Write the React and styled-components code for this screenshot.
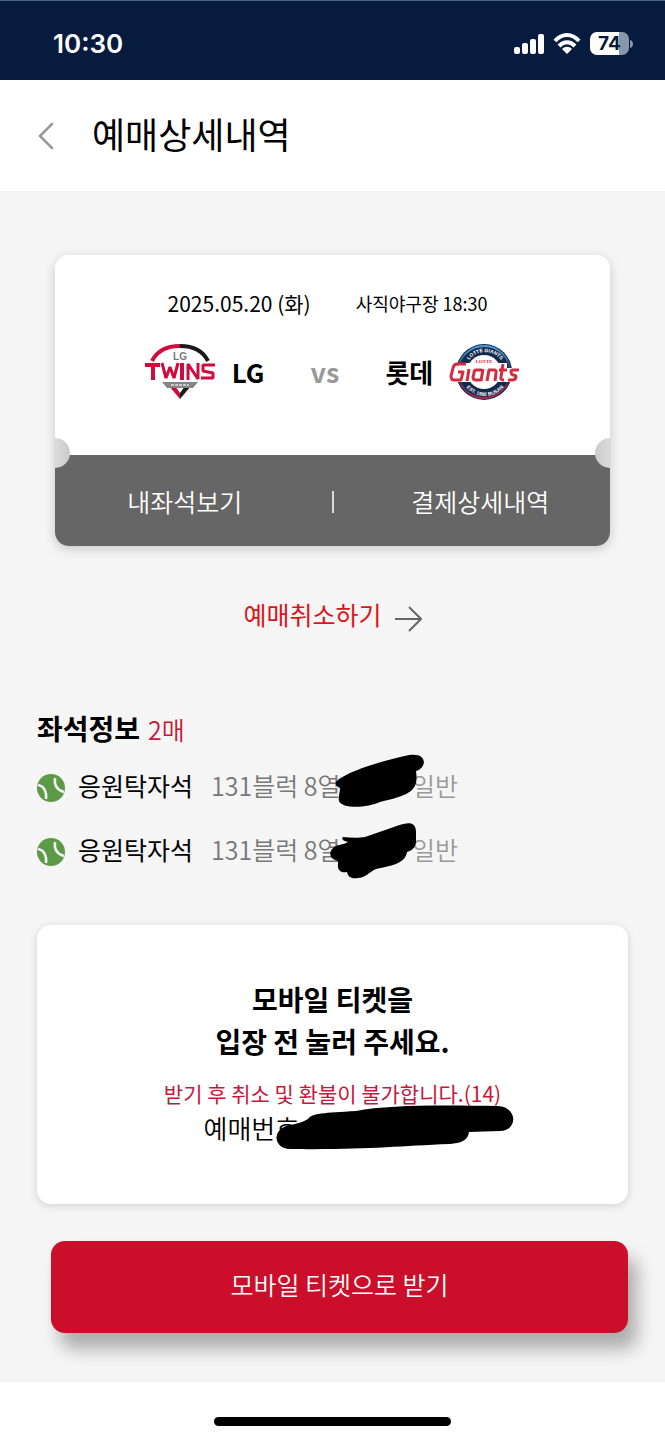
import React from 'react';
import styled, { createGlobalStyle } from 'styled-components';

const Global = createGlobalStyle`
  *, *::before, *::after { box-sizing: border-box; }
  body { margin: 0; background: #fff; }
  body, button { font-family: "Noto Sans CJK KR", "Noto Sans", sans-serif; }
  h1, h2, p, ul { margin: 0; padding: 0; font-weight: 400; }
  svg { display: block; }
`;

const Page = styled.div`
  min-height: 100vh;
  display: flex;
  flex-direction: column;
  color: #000;
`;

const StatusBar = styled.div`
  display: flex;
  align-items: center;
  justify-content: space-between;
  height: 80px;
  padding: 6px 32px 0 53px;
  background: #061b3e;
  border-top: 1px solid #4d668c;
  color: #fff;
`;

const Clock = styled.time`
  font: 600 26px/32px Inter, sans-serif;
`;

const StatusIcons = styled.div`
  display: flex;
  align-items: center;
  gap: 9px;
`;

const Battery = styled.div`
  display: flex;
  align-items: center;
  gap: 1px;
`;

const BatteryBody = styled.div`
  width: 39px;
  height: 23px;
  border-radius: 7px;
  background: linear-gradient(90deg, #fff 74%, #8b96a9 74%);
  color: #061b3e;
  font: 700 19px/23px Inter, sans-serif;
  text-align: center;
`;

const Header = styled.header`
  display: flex;
  align-items: center;
  gap: 38px;
  height: 111px;
  padding: 0 37px;
`;

const BackButton = styled.button`
  padding: 0;
  border: 0;
  background: none;
`;

const Title = styled.h1`
  padding-bottom: 6px;
  font-size: 36px;
  line-height: 52px;
`;

const Main = styled.main`
  flex: 1;
  padding: 64px 37px 48px;
  background: #f5f5f5;
`;

const Ticket = styled.section`
  position: relative;
  margin: 0 18px;
  border-radius: 14px;
  box-shadow: 0 3px 12px rgba(0, 0, 0, 0.18);
`;

const TicketTop = styled.div`
  display: flex;
  flex-direction: column;
  align-items: center;
  gap: 24px;
  height: 200px;
  padding-top: 32px;
  border-radius: 14px 14px 0 0;
  background: #fff;
`;

const Schedule = styled.div`
  display: flex;
  align-items: center;
  gap: 45px;
  padding-right: 10px;
  line-height: 32px;
`;

const DateText = styled.span`
  font-size: 21px;
`;

const Venue = styled.span`
  font-size: 18px;
`;

const Match = styled.div`
  display: flex;
  align-items: center;
`;

const Team = styled.div`
  display: flex;
  align-items: center;
  gap: 16px;
  font-size: 26px;
  line-height: 40px;
  font-weight: 700;
`;

const Versus = styled.span`
  margin: 0 46px;
  color: #999;
  font-size: 27px;
  line-height: 40px;
  font-weight: 700;
`;

const TicketActions = styled.div`
  display: grid;
  grid-template-columns: 1fr 2px 1fr;
  column-gap: 17px;
  align-items: center;
  height: 91px;
  padding-top: 2px;
  border-radius: 0 0 14px 14px;
  background: #666;
`;

const TicketAction = styled.button`
  padding: 0 0 2px;
  border: 0;
  background: none;
  color: #fff;
  font-size: 25px;
  line-height: 36px;
  font-weight: 350;
`;

const Divider = styled.span`
  height: 22px;
  background: #ddd;
`;

const Notch = styled.span`
  position: absolute;
  top: 183px;
  ${(p) => p.$side}: -1px;
  width: 16px;
  height: 30px;
  border-radius: ${(p) => (p.$side === 'left' ? '0 15px 15px 0' : '15px 0 0 15px')};
  background: linear-gradient(
    ${(p) => (p.$side === 'left' ? '90deg' : '270deg')},
    #dcdcdc,
    #cacaca
  );
`;

const CancelLink = styled.a`
  display: flex;
  align-items: center;
  justify-content: center;
  gap: 13px;
  margin-top: 50px;
  color: #d8151b;
  font-size: 25px;
  line-height: 36px;
  text-decoration: none;
  svg { margin-top: 10px; }
`;

const SectionTitle = styled.h2`
  display: flex;
  align-items: baseline;
  gap: 8px;
  margin-top: 75px;
  font-size: 28px;
  line-height: 42px;
  font-weight: 700;
`;

const Count = styled.span`
  color: #c4183c;
  font-size: 25px;
  font-weight: 350;
`;

const SeatList = styled.ul`
  display: grid;
  gap: 28px;
  margin-top: 17px;
  list-style: none;
`;

const Seat = styled.li`
  position: relative;
  display: flex;
  align-items: center;
  font-size: 25px;
  line-height: 36px;
  white-space: pre;
  svg:first-child { margin-top: 6px; }
`;

const SeatName = styled.span`
  margin: 0 18px 0 13px;
`;

const SeatPlace = styled.span`
  width: 201px;
  color: #777;
  font-weight: 350;
`;

const SeatType = styled.span`
  color: #999;
  font-weight: 350;
`;

const Scribble = styled.svg`
  position: absolute;
  top: ${(p) => p.$top}px;
  left: ${(p) => p.$left}px;
`;

const Notice = styled.section`
  margin-top: 58px;
  padding: 53px 0 58px;
  border-radius: 14px;
  background: #fff;
  box-shadow: 0 2px 8px rgba(0, 0, 0, 0.15);
  text-align: center;
`;

const NoticeTitle = styled.h2`
  font-size: 28px;
  line-height: 42px;
  font-weight: 700;
`;

const Warning = styled.p`
  margin-top: 14px;
  color: #c4183c;
  font-size: 21px;
  line-height: 34px;
`;

const BookingNumber = styled.p`
  position: relative;
  width: 310px;
  margin: 0 auto;
  padding-left: 26px;
  font-size: 26px;
  line-height: 36px;
  font-weight: 350;
  text-align: left;
`;

const ReceiveButton = styled.button`
  display: block;
  width: calc(100% - 14px);
  margin: 37px 0 0 14px;
  padding: 25px 0 31px;
  border: 0;
  border-radius: 14px;
  background: #cb0e2a;
  box-shadow: 9px 16px 18px rgba(0, 0, 0, 0.3);
  color: #fff;
  font-size: 25px;
  line-height: 36px;
  font-weight: 350;
`;

const HomeArea = styled.footer`
  display: flex;
  align-items: center;
  justify-content: center;
  height: 58px;
  padding-top: 21px;
`;

const HomeBar = styled.span`
  width: 237px;
  height: 9px;
  border-radius: 5px;
  background: #000;
`;

const TwinsLogo = () => (
  <svg width="72" height="56" viewBox="0 0 72 56" role="img" aria-label="LG Twins">
    <path d="M8 17C13 7 23 2 36 2" fill="none" stroke="#d00b3d" strokeWidth="4" />
    <path d="M36 2C49 2 59 7 64 17" fill="none" stroke="#1c1a1b" strokeWidth="4" />
    <text x="36" y="16" textAnchor="middle" fontFamily="Liberation Sans" fontSize="10" fontWeight="700" fill="#777">LG</text>
    <g fill="none" stroke="#d00b3d" strokeWidth="4" strokeLinejoin="bevel">
      <path d="M1 21H16M9 21V36" />
      <path d="M18 19L22 34L26 23L30 34L34 19" strokeWidth="3" />
      <path d="M38 19V36" />
      <path d="M44 36V20L54 35V19" strokeWidth="3" />
      <path d="M71 21H59V27L69 29V34H57" strokeWidth="3" />
    </g>
    <path d="M25 42L36 55V49L31 42z" fill="#d00b3d" />
    <path d="M47 42L36 55V49L41 42z" fill="#1c1a1b" />
    <path d="M18 38H54L49 44H23z" fill="#858585" />
    <path d="M27 41H45" stroke="#ccc" strokeWidth="2" strokeDasharray="3 1" />
  </svg>
);

const GiantsLogo = () => (
  <svg width="72" height="58" viewBox="0 0 72 58" role="img" aria-label="Lotte Giants">
    <defs>
      <linearGradient id="ring" x1="0" y1="0" x2="0" y2="1">
        <stop offset="0" stopColor="#4aa3d8" />
        <stop offset="0.5" stopColor="#1a3157" />
        <stop offset="1" stopColor="#b32a50" />
      </linearGradient>
      <path id="arcTop" d="M16 29A20 20 0 0 1 56 29" />
      <path id="arcBottom" d="M12 29A24 24 0 0 0 60 29" />
      <g id="wordmark" fill="none" strokeLinejoin="round">
        <path d="M17 21H8Q5 21 4 25L2 33Q2 37 5 37H12L14 29H9" />
        <path d="M20 26L18 38" />
        <path d="M33 27H27Q25 27 25 30L24 34Q24 37 27 37H32M34 26L32 38" />
        <path d="M38 38L40 27H45Q48 27 47 30L46 38" />
        <path d="M54 21L52 34Q51 37 55 37M50 27H58" />
        <path d="M70 27H64Q62 27 62 29T64 32Q67 32 67 34T64 37H59" />
      </g>
    </defs>
    <circle cx="35" cy="29" r="28" fill="#14294c" />
    <circle cx="35" cy="29" r="26" fill="none" stroke="url(#ring)" strokeWidth="2" />
    <circle cx="35" cy="29" r="17" fill="#fff" />
    <g fontFamily="Liberation Sans" fontWeight="700" fill="#fff" fontSize="5" textAnchor="middle">
      <text><textPath href="#arcTop" startOffset="50%">LOTTE GIANTS</textPath></text>
      <text><textPath href="#arcBottom" startOffset="50%">EST. 1982 BUSAN</textPath></text>
    </g>
    <text x="35" y="20" textAnchor="middle" fontFamily="Liberation Serif" fontSize="5" fontWeight="700" fill="#cf2741">LOTTE</text>
    <path d="M5 24L14 20H58V25H71L67 39H3L2 30Z" fill="#fff" />
    <use href="#wordmark" stroke="#d32b40" strokeWidth="3" />
  </svg>
);

const BallIcon = () => (
  <svg width="28" height="28" viewBox="0 0 28 28" aria-hidden="true">
    <circle cx="14" cy="14" r="14" fill="#5d9a47" />
    <path d="M1 11C7 12 10 18 9 25M18 4C17 11 20 16 27 18" fill="none" stroke="#f5f5f5" strokeWidth="2.5" />
  </svg>
);

const seats = [
  {
    id: 'first',
    top: -13,
    left: 297,
    redaction:
      'M2 28C8 20 42 8 75 1C94 -2 93 14 82 17C85 37 76 41 46 48C33 54 8 55 5 47C4 42 6 39 6 34C2 32 1 30 2 28Z',
  },
  {
    id: 'second',
    top: -8,
    left: 292,
    redaction:
      'M14 14C22 15 30 15 36 14L62 5C75 0 87 -4 87 9V18C87 25 82 28 78 29C76 42 59 43 47 46C40 49 36 55 29 55C22 56 19 54 18 49C13 50 8 48 9 41V38C1 36 -1 30 4 25C8 21 14 22 19 19C14 18 12 16 14 14Z',
  },
];

export default function App() {
  return (
    <Page>
      <Global />
      <StatusBar>
        <Clock>10:30</Clock>
        <StatusIcons>
          <svg width="30" height="20" viewBox="0 0 30 20" fill="#fff" aria-hidden="true">
            <rect x="0" y="13" width="6" height="7" rx="2" />
            <rect x="8" y="9" width="6" height="11" rx="2" />
            <rect x="16" y="5" width="6" height="15" rx="2" />
            <rect x="24" y="0" width="6" height="20" rx="2" />
          </svg>
          <svg width="28" height="21" viewBox="0 0 28 21" fill="none" stroke="#fff" strokeWidth="4" aria-hidden="true">
            <path d="M2 8C9 0 19 0 26 8" />
            <path d="M6 13C11 8 17 8 22 13" />
            <path d="M14 21L9 16C12 13 16 13 19 16Z" fill="#fff" stroke="none" />
          </svg>
          <Battery>
            <BatteryBody>74</BatteryBody>
            <svg width="3" height="8" viewBox="0 0 3 8" aria-hidden="true">
              <path d="M0 0C4 1 4 7 0 8z" fill="#8b96a9" />
            </svg>
          </Battery>
        </StatusIcons>
      </StatusBar>

      <Header>
        <BackButton aria-label="뒤로">
          <svg width="17" height="28" viewBox="0 0 17 28" fill="none" stroke="#999" strokeWidth="2.5" strokeLinecap="round">
            <path d="M15 2L3 14L15 26" />
          </svg>
        </BackButton>
        <Title>예매상세내역</Title>
      </Header>

      <Main>
        <Ticket>
          <TicketTop>
            <Schedule>
              <DateText>2025.05.20 (화)</DateText>
              <Venue>사직야구장 18:30</Venue>
            </Schedule>
            <Match>
              <Team><TwinsLogo />LG</Team>
              <Versus>vs</Versus>
              <Team>롯데<GiantsLogo /></Team>
            </Match>
          </TicketTop>
          <TicketActions>
            <TicketAction>내좌석보기</TicketAction>
            <Divider />
            <TicketAction>결제상세내역</TicketAction>
          </TicketActions>
          <Notch $side="left" />
          <Notch $side="right" />
        </Ticket>

        <CancelLink href="#cancel">
          예매취소하기
          <svg width="27" height="26" viewBox="0 0 27 26" fill="none" stroke="#666" strokeWidth="2" aria-hidden="true">
            <path d="M0 13H26M14 1L26 13L14 25" />
          </svg>
        </CancelLink>

        <SectionTitle>좌석정보<Count>2매</Count></SectionTitle>
        <SeatList>
          {seats.map((seat) => (
            <Seat key={seat.id}>
              <BallIcon />
              <SeatName>응원탁자석</SeatName>
              <SeatPlace>131블럭 8열</SeatPlace>
              <SeatType>일반</SeatType>
              <Scribble $top={seat.top} $left={seat.left} width="92" height="58" viewBox="0 0 92 58" aria-hidden="true">
                <path d={seat.redaction} />
              </Scribble>
            </Seat>
          ))}
        </SeatList>

        <Notice>
          <NoticeTitle>모바일 티켓을<br />입장 전 눌러 주세요.</NoticeTitle>
          <Warning>받기 후 취소 및 환불이 불가합니다.(14)</Warning>
          <BookingNumber>
            예매번호
            <Scribble $top={-5} $left={98} width="240" height="46" viewBox="0 0 240 46" aria-hidden="true">
              <path d="M32 14C36 8 48 8 80 6C110 0 160 0 222 1C242 2 242 26 224 26L193 27C192 36 184 38 174 39C120 41 90 45 14 44C-2 44 -4 26 10 21C18 19 26 18 32 14Z" />
            </Scribble>
          </BookingNumber>
        </Notice>

        <ReceiveButton>모바일 티켓으로 받기</ReceiveButton>
      </Main>

      <HomeArea><HomeBar /></HomeArea>
    </Page>
  );
}
